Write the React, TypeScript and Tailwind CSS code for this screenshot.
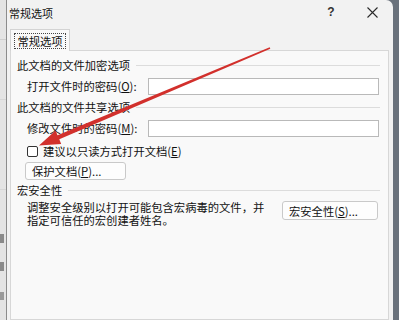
import React from 'react';

const font = { fontFamily: '"Noto Sans CJK SC", "Noto Sans", sans-serif' };

function Mn({ k }: { k: string }) {
  // mnemonic letter, underlined like a Win32 accelerator
  return (
    <span>
      (<span className="underline underline-offset-[1px]">{k}</span>)
    </span>
  );
}

function GroupHeader({ title }: { title: string }) {
  return (
    <div className="flex items-center h-[16px]">
      <span className="leading-[16px] whitespace-nowrap">{title}</span>
      <div className="flex-1 h-px bg-[#dcdcdc] ml-[6px]" />
    </div>
  );
}

function PasswordRow({ label, k }: { label: string; k: string }) {
  return (
    <div className="flex items-center h-[17px] pl-[10px]">
      <span className="w-[121px] whitespace-nowrap leading-[17px]">
        {label}
        <Mn k={k} />:
      </span>
      <div className="flex-1 h-[17px] bg-white border border-[#b9b9b9] mr-px" />
    </div>
  );
}

export default function App() {
  return (
    <div
      className="relative w-[399px] h-[320px] flex overflow-hidden bg-[#6a727c] text-[11.3px] text-[#111]"
      style={font}
    >
      {/* ── window behind, left edge ── */}
      <div className="w-[7px] shrink-0 bg-[#e4e4e4] border-r border-[#8c8c8c] flex flex-col overflow-hidden">
        <div className="h-[40px] border-b border-[#cfcfcf]" />
        <div className="h-[60px] border-b border-[#d6d6d6]" />
        <div className="h-[90px] border-b border-[#d6d6d6]" />
        <div className="mt-[44px] w-[4px] h-[9px] bg-[#8a8a8a]" />
        <div className="mt-[19px] w-[4px] h-[9px] bg-[#8a8a8a]" />
        <div className="mt-[21px] w-[4px] h-[8px] bg-[#9a9a9a]" />
      </div>

      {/* ── dialog ── */}
      <div className="w-[386px] shrink-0 flex flex-col bg-[#f2f2f2] rounded-tr-[7px]">
        {/* Title bar */}
        <div className="h-[29px] flex items-center pl-[2px] shrink-0">
          <span className="text-[11px] leading-[14px] -mt-[4px]">常规选项</span>
          <div className="ml-auto w-[40px] h-full flex items-center justify-center -mt-[5px]">
            <span className="text-[12px] font-bold text-[#333]" style={{ fontFamily: '"Liberation Sans", sans-serif' }}>?</span>
          </div>
          <div className="w-[42px] h-full flex items-center justify-center -mt-[5px]">
            <svg width="11" height="11" viewBox="0 0 11 11">
              <path d="M0.5 0.5L10.5 10.5M10.5 0.5L0.5 10.5" stroke="#2a2a2a" strokeWidth="1.1" />
            </svg>
          </div>
        </div>

        {/* Tab strip */}
        <div className="flex pl-[3px] shrink-0">
          <div className="w-[60px] h-[22px] -mb-px bg-[#f9f9f9] border border-b-0 border-[#d3d3d3] flex items-center justify-center relative z-10">
            <span className="border border-dotted border-[#444] px-[2px] leading-[14px]">常规选项</span>
          </div>
        </div>

        {/* Tab panel */}
        <div className="flex-1 ml-[3px] mr-[4px] bg-[#f9f9f9] border border-[#d7d7d7] pt-[6px] pl-[6px] pr-[8px]">
          <GroupHeader title="此文档的文件加密选项" />
          <div className="mt-[5px]">
            <PasswordRow label="打开文件时的密码" k="O" />
          </div>

          <div className="mt-[4px]">
            <GroupHeader title="此文档的文件共享选项" />
          </div>
          <div className="mt-[5px]">
            <PasswordRow label="修改文件时的密码" k="M" />
          </div>

          <div className="mt-[7px] flex items-center h-[14px] pl-[10px]">
            <div className="w-[11px] h-[11px] border border-[#333] rounded-[2px] bg-white" />
            <span className="ml-[5px] leading-[14px]">
              建议以只读方式打开文档
              <Mn k="E" />
            </span>
          </div>

          <div className="mt-[4px] pl-[8px]">
            <div className="w-[101px] h-[18px] border border-[#c9c9c9] rounded-[3px] bg-[#fdfdfd] flex items-center pl-[6px]">
              <span className="leading-[16px]">
                保护文档
                <Mn k="P" />
                ...
              </span>
            </div>
          </div>

          <div className="mt-[2px]">
            <GroupHeader title="宏安全性" />
          </div>

          <div className="mt-[2px] flex pl-[10px]">
            <div className="w-[255px] pt-px flex flex-col">
              <span className="leading-[13px] h-[13px] whitespace-nowrap">调整安全级别以打开可能包含宏病毒的文件，并</span>
              <span className="leading-[13px] h-[13px] whitespace-nowrap">指定可信任的宏创建者姓名。</span>
            </div>
            <div className="ml-auto mr-[2px] mt-px w-[96px] h-[19px] border border-[#c9c9c9] rounded-[3px] bg-[#fdfdfd] flex items-center pl-[6px]">
              <span className="leading-[16px]">
                宏安全性
                <Mn k="S" />
                ...
              </span>
            </div>
          </div>
        </div>
      </div>

      {/* ── red annotation arrow ── */}
      <svg
        className="absolute inset-0 pointer-events-none"
        width="399"
        height="320"
        viewBox="0 0 399 320"
      >
        <polygon
          points="269.7,47.3 270.3,48.7 59.3,139.3 61.2,144.0 39,145.5 55.6,130.6 57.5,135.2"
          fill="#d2302c"
        />
      </svg>
    </div>
  );
}
